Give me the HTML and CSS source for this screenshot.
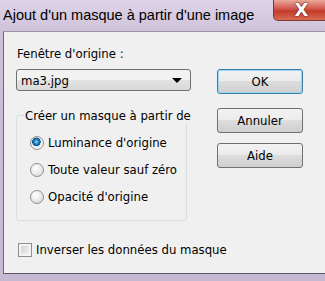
FILE: index.html
```html
<!DOCTYPE html>
<html lang="fr">
<head>
    <meta charset="UTF-8">
    <title>Ajout d'un masque à partir d'une image</title>
    <link rel="stylesheet" href="styles.css">
</head>
<body>
    <div class="window">
        <div class="titlebar">
            <span class="title">Ajout d'un masque à partir d'une image</span>
            <span class="close">X</span>
        </div>

        <div class="client">
            <div class="main">
                <div class="left">
                    <label class="field-label" for="source">Fenêtre d'origine :</label>
                    <div class="combo" id="source">
                        <span>ma3.jpg</span>
                        <span class="arrow"></span>
                    </div>

                    <fieldset class="group">
                        <legend>Créer un masque à partir de</legend>
                        <label class="option">
                            <input type="radio" name="mode" checked>
                            <span>Luminance d'origine</span>
                        </label>
                        <label class="option">
                            <input type="radio" name="mode">
                            <span>Toute valeur sauf zéro</span>
                        </label>
                        <label class="option">
                            <input type="radio" name="mode">
                            <span>Opacité d'origine</span>
                        </label>
                    </fieldset>
                </div>

                <div class="buttons">
                    <button class="default">OK</button>
                    <button class="cancel">Annuler</button>
                    <button class="help">Aide</button>
                </div>
            </div>

            <label class="check">
                <input type="checkbox">
                <span>Inverser les données du masque</span>
            </label>
        </div>
    </div>
</body>
</html>
```

FILE: styles.css
```css
body {
    margin: 0;
    font-family: "DejaVu Sans Condensed", "DejaVu Sans", sans-serif;
    font-size: 13px;
    color: #000;
}

.window {
    width: 325px;
    height: 281px;
    background: linear-gradient(#ddd3e6, #cbbfd8 40px, #c6b9d4);
    overflow: hidden;
}

.titlebar {
    height: 31px;
    display: flex;
    justify-content: space-between;
    align-items: flex-start;
}

.title {
    font-family: "Liberation Sans", Arial, sans-serif;
    font-size: 14.5px;
    white-space: nowrap;
    margin: 7px 0 0 3px;
    color: #000;
}

.close {
    flex-shrink: 0;
    width: 55px;
    height: 20px;
    margin-right: -5px;
    border: 1px solid #7a3a36;
    border-top: none;
    border-radius: 0 0 0 5px;
    background: linear-gradient(#e9a99a, #d0544a 45%, #c43b2b 55%, #d86a52);
    color: #fff;
    font-family: "DejaVu Sans", sans-serif;
    font-weight: bold;
    font-size: 18px;
    text-align: center;
    line-height: 20px;
    text-shadow: 0 0 2px #5a1a10, 0 0 1px #5a1a10;
}

.client {
    height: 243px;
    margin-left: 3px;
    border-left: 1px solid #6d6774;
    border-top: 1px solid #9d95a6;
    border-bottom: 1px solid #5d5866;
    background-color: #f0f0f0;
    padding: 14px 0 0 12px;
    box-sizing: border-box;
}

.main {
    display: flex;
}

.left {
    width: 175px;
}

.field-label {
    display: block;
    height: 16px;
    padding-left: 1px;
}

.combo {
    margin-top: 7px;
    height: 20px;
    border: 1px solid #707070;
    border-radius: 3px;
    background: linear-gradient(#f2f2f2 50%, #e3e3e3 50%, #d8d8d8);
    display: flex;
    align-items: center;
    justify-content: space-between;
    padding: 0 8px 0 4px;
}

.arrow {
    width: 0;
    height: 0;
    border-left: 5px solid transparent;
    border-right: 5px solid transparent;
    border-top: 5px solid #000;
}

.group {
    margin: 17px 0 0 0;
    padding: 6px 0 10px 11px;
    width: 171px;
    min-width: 0;
    box-sizing: border-box;
    border: 1px solid #d5dfe5;
    border-radius: 3px;
}

.group legend {
    white-space: nowrap;
    padding: 0 1px;
    margin-left: -4px;
}

.option {
    display: flex;
    align-items: center;
    height: 27px;
}

.option input {
    appearance: none;
    margin: 0 4px 0 2px;
    width: 14px;
    height: 14px;
    border-radius: 50%;
    border: 1px solid #8e8f8f;
    background: radial-gradient(circle at 40% 35%, #ffffff, #e6e6e6 60%, #c8c8c8);
    box-sizing: border-box;
}

.option input:checked {
    background: radial-gradient(circle at 45% 40%, #9fd6f7 0, #2b8ccc 2px, #0d4f8a 4px, #dfe8ee 4.5px, #f4f4f4 6px);
}

.buttons {
    margin-left: 26px;
    padding-top: 23px;
    display: flex;
    flex-direction: column;
}

button {
    width: 86px;
    height: 25px;
    font-family: inherit;
    font-size: 13px;
    border: 1px solid #707070;
    border-radius: 3px;
    background: linear-gradient(#f2f2f2, #ebebeb 50%, #dddddd 50%, #cfcfcf);
    padding: 0;
    color: #000;
}

button.default {
    border-color: #3c7fb1;
    box-shadow: inset 0 0 0 1px #9ed4f0;
}

button.cancel {
    margin-top: 14px;
}

button.help {
    margin-top: 10px;
}

.check {
    display: flex;
    align-items: center;
    margin-top: 21px;
}

.check input {
    appearance: none;
    margin: 0 4px 0 2px;
    width: 14px;
    height: 14px;
    border: 1px solid #8e8f8f;
    background: linear-gradient(135deg, #cbcfd5, #f5f5f5);
    box-shadow: inset 0 0 0 2px #f4f4f4;
    box-sizing: border-box;
}
```
